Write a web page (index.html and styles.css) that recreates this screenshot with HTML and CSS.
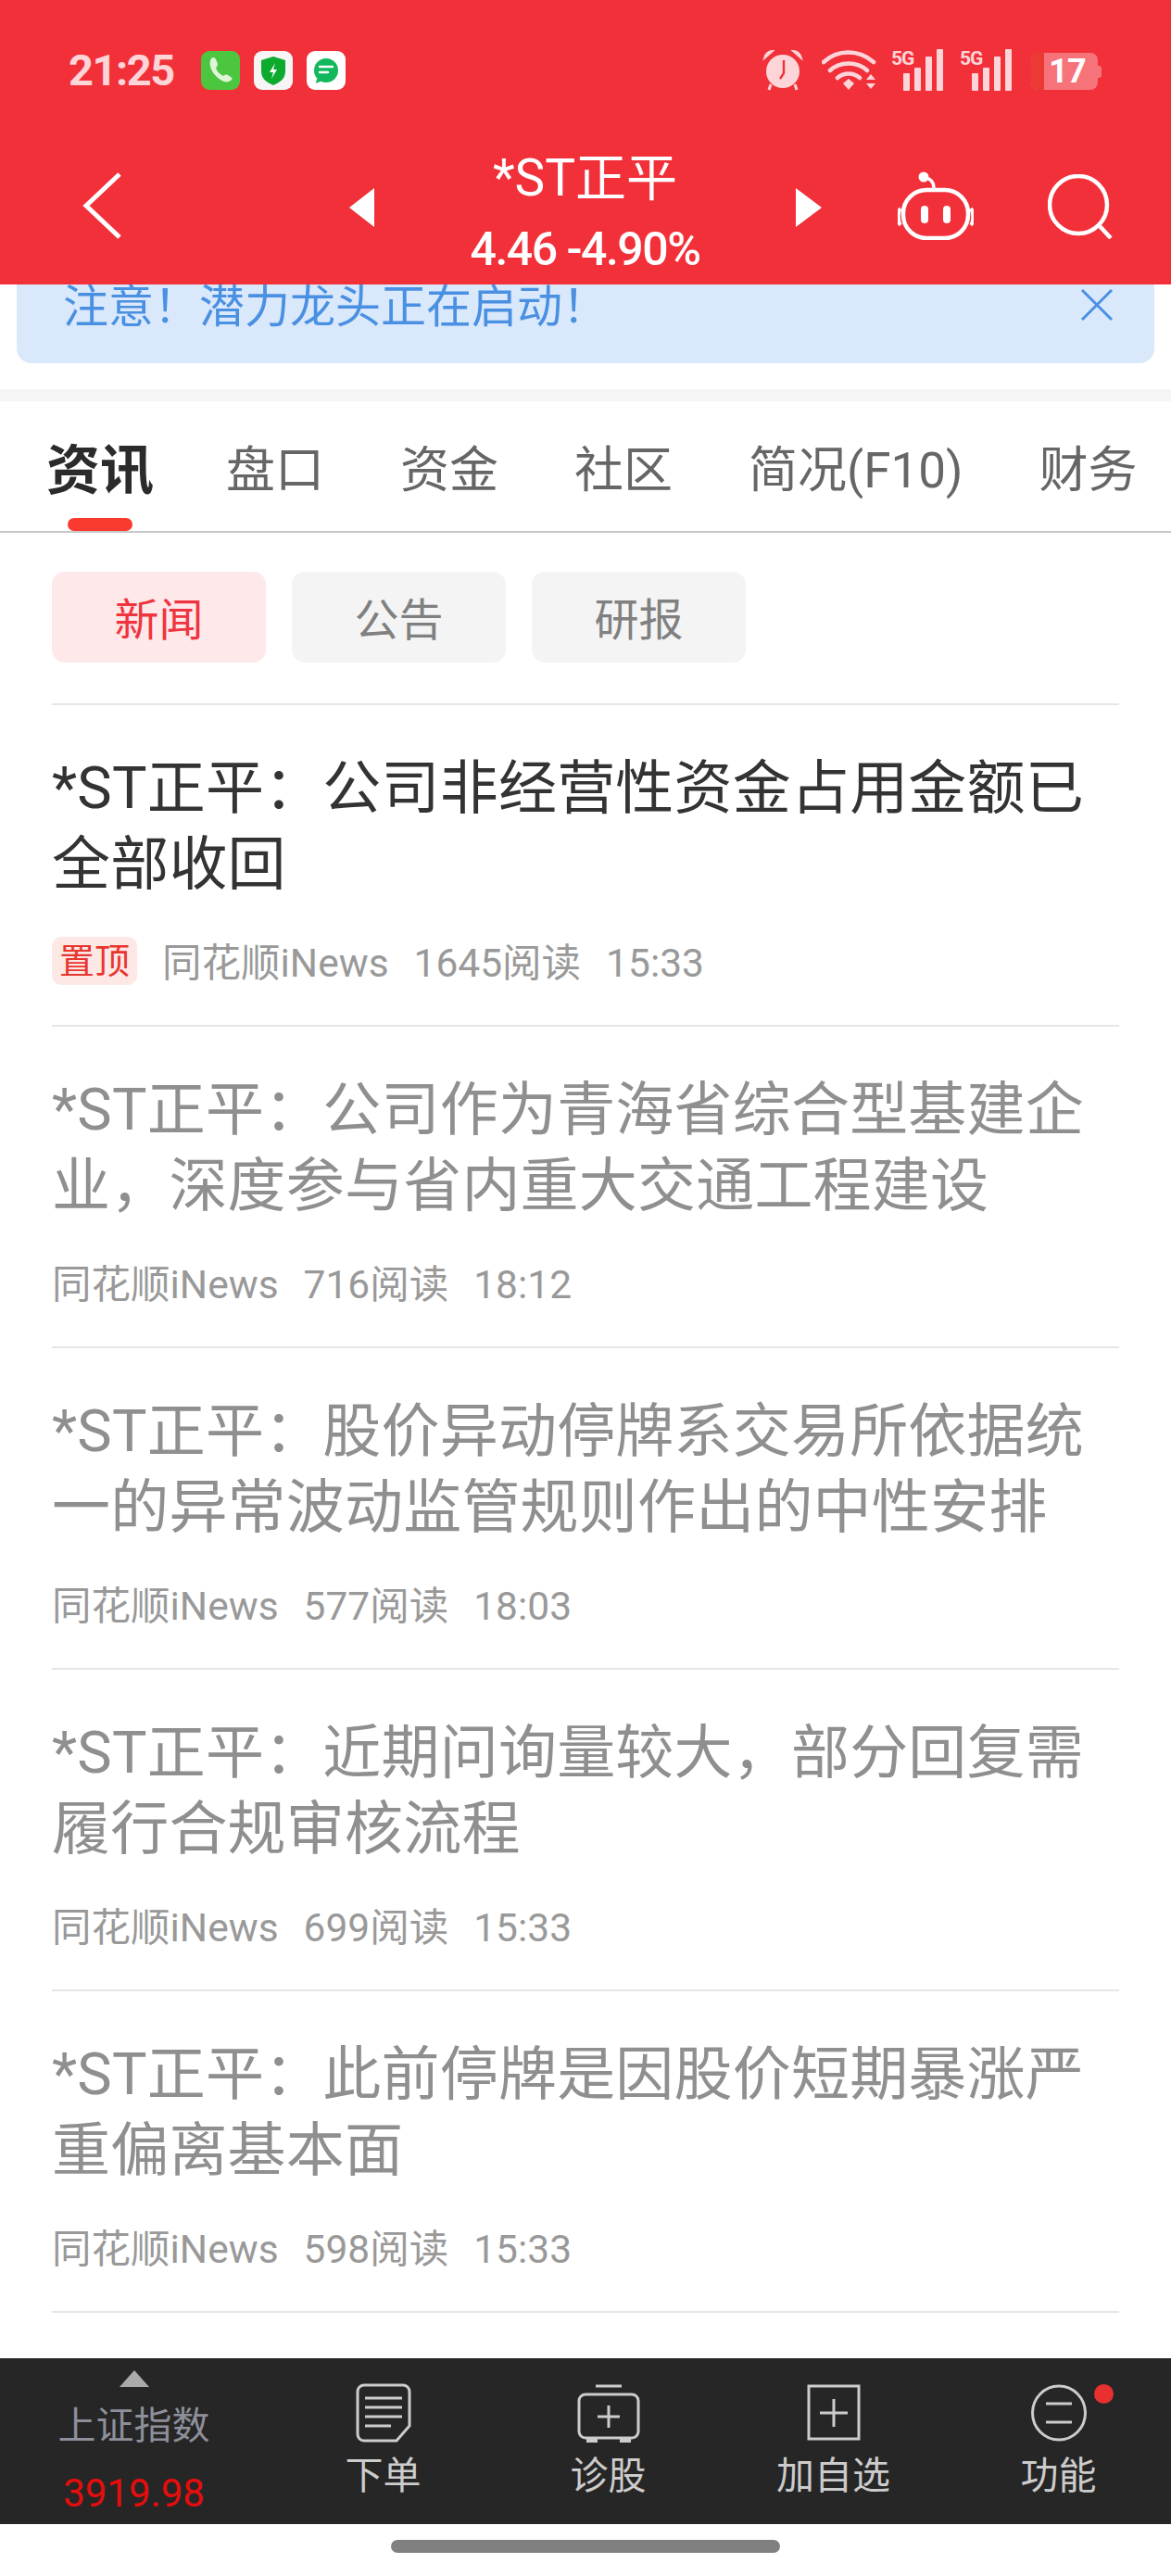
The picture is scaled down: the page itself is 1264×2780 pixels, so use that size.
FILE: index.html
```html
<!DOCTYPE html>
<html lang="zh-CN">
<head>
  <meta charset="UTF-8" />
  <meta name="viewport" content="width=device-width, initial-scale=1.0" />
  <title>*ST正平</title>
  <link rel="stylesheet" href="styles.css">
</head>
<body>
  <div class="page">
    <header class="top">
      <div class="status">
        <div class="status-left">
          <span class="clock">21:25</span>
          <svg class="app-icon" viewBox="0 0 42 42"><rect width="42" height="42" rx="9" fill="#4cc53f"/><path d="M11 8c2-2 4-1 5 1l2 5c0 2-1 3-2 4 1 4 4 7 8 9 1-1 3-2 5-1l3 2c2 1 2 3 0 4-3 2-7 2-11-1-6-4-10-9-11-15-1-3 0-6 1-8z" fill="#dff5d8"/></svg>
          <svg class="app-icon" viewBox="0 0 42 42"><rect width="42" height="42" rx="9" fill="#f4f5f4"/><path d="M21 6l13 4v12c0 8-6 12-13 15-7-3-13-7-13-15V10z" fill="#0cab2e"/><path d="M23 13l-6 10h4l-2 7 6-10h-4z" fill="#fff"/></svg>
          <svg class="app-icon" viewBox="0 0 42 42"><rect width="42" height="42" rx="9" fill="#fff"/><circle cx="21" cy="21" r="13" fill="#12b85c"/><path d="M11 30l-1 5 7-3z" fill="#12b85c"/><path d="M14 17h14M14 23h9" stroke="#fff" stroke-width="2.4" stroke-linecap="round"/></svg>
        </div>
        <div class="status-right">
          <svg class="alarm" viewBox="0 0 44 45"><path d="M2 10c1-5 5-8 9-8l-9 8zM42 10c-1-5-5-8-9-8l9 8z" fill="#fdd5d8" stroke="#fdd5d8" stroke-width="2"/><ellipse cx="22" cy="24" rx="18" ry="18" fill="#fdd5d8"/><path d="M9 38l-2 6M35 38l2 6" stroke="#fdd5d8" stroke-width="3"/><path d="M23 12v14l-4 6" stroke="#f2303a" stroke-width="2.4" fill="none"/></svg>
          <svg class="wifi" viewBox="0 0 60 45"><path d="M2 14c15-14 38-14 54 0M9 23c11-10 29-10 40 0M17 31c7-6 17-6 24 0" stroke="#fdd5d8" stroke-width="4.5" fill="none" stroke-linecap="round"/><path d="M23 37l6-5 6 5-6 7z" fill="#fdd5d8"/><path d="M48 33l5-6 5 6zM48 37h10l-5 6z" fill="#fdd5d8"/></svg>
          <div class="signal">
            <span class="fiveg">5G</span>
            <i class="b1"></i><i class="b2"></i><i class="b3"></i><i class="b4"></i>
          </div>
          <div class="signal">
            <span class="fiveg">5G</span>
            <i class="b1"></i><i class="b2"></i><i class="b3"></i><i class="b4"></i>
          </div>
          <div class="battery">
            <span class="battery-low"></span>
            <span class="battery-num">17</span>
          </div>
        </div>
      </div>
      <div class="nav">
        <svg class="back" viewBox="0 0 44 74"><path d="M41 3L5 37l36 34" stroke="#fff" stroke-width="5" fill="none"/></svg>
        <div class="prev"></div>
        <div class="stock">
          <div class="stock-name">*ST正平</div>
          <div class="stock-price">4.46 -4.90%</div>
        </div>
        <div class="next"></div>
        <svg class="robot" viewBox="0 0 82 74"><circle cx="28" cy="6" r="5.5" fill="#fff"/><path d="M30 7c6 1 9 4 9 11" stroke="#fff" stroke-width="3.5" fill="none"/><rect x="6" y="20" width="70" height="52" rx="25" stroke="#fff" stroke-width="4.5" fill="none"/><path d="M3 40c-3 4-3 14 0 18M79 40c3 4 3 14 0 18" stroke="#fff" stroke-width="4" fill="none"/><rect x="25" y="37" width="8" height="19" rx="4" fill="#fff"/><rect x="49" y="37" width="8" height="19" rx="4" fill="#fff"/></svg>
        <svg class="search" viewBox="0 0 70 70"><circle cx="33" cy="33" r="31" stroke="#fff" stroke-width="4.5" fill="none"/><path d="M56 56l12 13" stroke="#fff" stroke-width="4.5"/></svg>
      </div>
    </header>

    <main class="content">
      <div class="banner">
        <span>注意！潜力龙头正在启动！</span>
        <svg class="banner-close" viewBox="0 0 36 36"><path d="M2 2l32 32M34 2L2 34" stroke="#4a90e2" stroke-width="3"/></svg>
      </div>
      <div class="strip"></div>

      <div class="tabs">
        <div class="tab active">资讯</div>
        <div class="tab">盘口</div>
        <div class="tab">资金</div>
        <div class="tab">社区</div>
        <div class="tab">简况(F10)</div>
        <div class="tab">财务</div>
      </div>

      <div class="sub-tabs">
        <div class="sub-tab on">新闻</div>
        <div class="sub-tab">公告</div>
        <div class="sub-tab">研报</div>
      </div>

      <div class="news">
        <div class="news-item top-item">
          <div class="news-title">*ST正平：公司非经营性资金占用金额已全部收回</div>
          <div class="news-meta"><span class="pin">置顶</span><span>同花顺iNews</span><span>1645阅读</span><span>15:33</span></div>
        </div>
        <div class="news-item">
          <div class="news-title">*ST正平：公司作为青海省综合型基建企业，深度参与省内重大交通工程建设</div>
          <div class="news-meta"><span>同花顺iNews</span><span>716阅读</span><span>18:12</span></div>
        </div>
        <div class="news-item">
          <div class="news-title">*ST正平：股价异动停牌系交易所依据统一的异常波动监管规则作出的中性安排</div>
          <div class="news-meta"><span>同花顺iNews</span><span>577阅读</span><span>18:03</span></div>
        </div>
        <div class="news-item">
          <div class="news-title">*ST正平：近期问询量较大，部分回复需履行合规审核流程</div>
          <div class="news-meta"><span>同花顺iNews</span><span>699阅读</span><span>15:33</span></div>
        </div>
        <div class="news-item">
          <div class="news-title">*ST正平：此前停牌是因股价短期暴涨严重偏离基本面</div>
          <div class="news-meta"><span>同花顺iNews</span><span>598阅读</span><span>15:33</span></div>
        </div>
      </div>
    </main>

    <footer class="bar">
      <div class="bar-index">
        <div class="index-arrow"></div>
        <div class="index-name">上证指数</div>
        <div class="index-value">3919.98</div>
      </div>
      <div class="bar-item">
        <svg class="bar-icon" viewBox="0 0 60 64"><path d="M9 2h42a7 7 0 0 1 7 7v37L44 62H9a7 7 0 0 1-7-7V9a7 7 0 0 1 7-7z" stroke="#ccc" stroke-width="3" fill="none"/><path d="M10 16h40M10 26h40M10 36h40M10 46h28" stroke="#ccc" stroke-width="3"/></svg>
        <span>下单</span>
      </div>
      <div class="bar-item">
        <svg class="bar-icon wide" viewBox="0 0 68 64"><path d="M20 3h28" stroke="#ccc" stroke-width="3"/><rect x="2" y="12" width="64" height="47" rx="7" stroke="#ccc" stroke-width="3" fill="none"/><path d="M34 24v24M22 36h24" stroke="#ccc" stroke-width="3"/><path d="M10 59h12v5H10zM46 59h12v5H46z" fill="#ccc"/></svg>
        <span>诊股</span>
      </div>
      <div class="bar-item">
        <svg class="bar-icon" viewBox="0 0 60 64"><rect x="3" y="3" width="54" height="57" stroke="#ccc" stroke-width="3" fill="none"/><path d="M30 17v30M15 32h30" stroke="#ccc" stroke-width="3"/></svg>
        <span>加自选</span>
      </div>
      <div class="bar-item">
        <svg class="bar-icon" viewBox="0 0 60 64"><ellipse cx="30" cy="32" rx="28.5" ry="29" stroke="#ccc" stroke-width="3" fill="none"/><path d="M16 22h28M16 42h28" stroke="#ccc" stroke-width="3"/></svg>
        <span class="dot"></span>
        <span>功能</span>
      </div>
    </footer>

    <div class="home-area"><div class="home-line"></div></div>
  </div>
</body>
</html>
```

FILE: styles.css
```css
* {
  box-sizing: border-box;
}
body {
  margin: 0;
  padding: 0;
  background: #fff;
  font-family: Roboto, "Noto Sans CJK SC", sans-serif;
}
.page {
  display: flex;
  flex-direction: column;
  height: 2780px;
  overflow: hidden;
}

/* red header */
.top {
  flex: none;
  height: 307px;
  background: #f2303a;
  color: #fff;
  position: relative;
  z-index: 2;
}
.status {
  display: flex;
  justify-content: space-between;
  align-items: flex-start;
  padding: 53px 75px 0 74px;
  height: 110px;
}
.status-left {
  display: flex;
  align-items: center;
  gap: 15px;
  height: 45px;
}
.clock {
  font-size: 47px;
  font-weight: 700;
  letter-spacing: -1.5px;
  color: #fdd5d8;
  width: 128px;
}
.app-icon {
  width: 42px;
  height: 42px;
}
.status-right {
  display: flex;
  align-items: flex-start;
  height: 45px;
}
.alarm {
  width: 44px;
  height: 45px;
  margin-right: 20px;
}
.wifi {
  width: 60px;
  height: 45px;
  margin-right: 15px;
}
.signal {
  display: flex;
  align-items: flex-end;
  gap: 5px;
  width: 56px;
  height: 45px;
  margin-right: 18px;
  position: relative;
  justify-content: flex-end;
}
.fiveg {
  position: absolute;
  left: 0;
  top: 0;
  font-size: 21px;
  line-height: 21px;
  font-weight: 700;
  letter-spacing: -1px;
  color: #fdd5d8;
}
.signal i {
  display: block;
  width: 7px;
  background: #fdd5d8;
  border-radius: 1px;
}
.signal .b1 { height: 19px; }
.signal .b2 { height: 25px; }
.signal .b3 { height: 37px; }
.signal .b4 { height: 45px; }
.battery {
  display: flex;
  align-items: center;
  justify-content: center;
  width: 72px;
  height: 40px;
  margin: 4px 4px 0 3px;
  border-radius: 8px;
  background: #f7737a;
  position: relative;
}
.battery::after {
  content: "";
  position: absolute;
  right: -4px;
  top: 14px;
  width: 4px;
  height: 13px;
  border-radius: 0 3px 3px 0;
  background: #f7737a;
}
.battery-low {
  position: absolute;
  left: 0;
  top: 0;
  bottom: 0;
  width: 14px;
  background: #ea3a33;
  border-radius: 8px 0 0 8px;
}
.battery-num {
  position: relative;
  font-size: 36px;
  font-weight: 700;
  letter-spacing: -1px;
  color: #fff;
  padding-left: 6px;
}

.nav {
  display: flex;
  align-items: flex-start;
  height: 197px;
}
.back {
  width: 44px;
  height: 74px;
  margin: 75px 0 0 88px;
}
.prev, .next {
  width: 0;
  height: 0;
  border-top: 21px solid transparent;
  border-bottom: 21px solid transparent;
  margin-top: 93px;
}
.prev {
  border-right: 27px solid #fff;
  margin-left: 245px;
}
.next {
  border-left: 28px solid #fff;
}
.stock {
  width: 455px;
  text-align: center;
  padding-top: 52px;
}
.stock-name {
  font-size: 55px;
  line-height: 60px;
}
.stock-price {
  font-size: 50px;
  line-height: 60px;
  margin-top: 17px;
  font-weight: 500;
  letter-spacing: -1.5px;
}
.robot {
  width: 82px;
  height: 74px;
  margin: 75px 0 0 82px;
}
.search {
  width: 70px;
  height: 70px;
  margin: 78px 0 0 80px;
}

/* scrolling part */
.content {
  flex: 1;
  overflow: hidden;
}
.banner {
  display: flex;
  justify-content: space-between;
  height: 120px;
  margin: -35px 18px 0;
  padding: 29px 44px 0 50px;
  background: #d9e8fb;
  border-radius: 16px;
  color: #4a90e2;
  font-size: 49px;
  line-height: 62px;
}
.banner-close {
  width: 36px;
  height: 36px;
  margin-top: 10px;
}
.strip {
  height: 13px;
  margin-top: 28px;
  background: #f5f5f5;
}
.tabs {
  display: flex;
  align-items: center;
  gap: 82px;
  height: 142px;
  padding: 10px 0 0 50px;
  border-bottom: 2px solid #c8c8c8;
  font-size: 53px;
  color: #666;
  white-space: nowrap;
}
.tab {
  position: relative;
  line-height: 130px;
}
.tab.active {
  font-size: 58px;
  font-weight: 700;
  color: #2b2b2b;
  margin-right: -4px;
}
.tab.active::after {
  content: "";
  position: absolute;
  left: 23px;
  bottom: 0;
  width: 70px;
  height: 14px;
  border-radius: 7px;
  background: #f93a2f;
}
.sub-tabs {
  display: flex;
  gap: 28px;
  padding: 42px 56px 44px;
}
.sub-tab {
  width: 231px;
  height: 98px;
  line-height: 106px;
  text-align: center;
  border-radius: 14px;
  font-size: 48px;
  background: #f4f4f4;
  color: #808080;
}
.sub-tab.on {
  background: #fee8ea;
  color: #f0343f;
}
.news {
  margin: 0 56px;
}
.news-item {
  height: 347px;
  border-top: 2px solid #e6e6e6;
  padding-top: 49px;
}
.news-item:last-child {
  border-bottom: 2px solid #e6e6e6;
  height: 349px;
}
.news-title {
  font-size: 63px;
  line-height: 82px;
  letter-spacing: 0.2px;
  color: #8f8f8f;
}
.top-item .news-title {
  color: #333;
}
.news-meta {
  display: flex;
  align-items: center;
  gap: 27px;
  margin-top: 39px;
  height: 54px;
  font-size: 42.5px;
  line-height: 54px;
  color: #999;
  white-space: nowrap;
}
.pin {
  width: 92px;
  height: 52px;
  margin-top: -6px;
  line-height: 52px;
  text-align: center;
  font-size: 38px;
  background: #fde8e6;
  color: #e8352e;
  border-radius: 10px;
}

/* bottom bar */
.bar {
  flex: none;
  display: flex;
  height: 179px;
  padding-left: 23px;
  background: #262626;
  color: #ccc;
}
.bar-index {
  width: 243px;
  margin-right: 26px;
  text-align: center;
  padding-top: 13px;
}
.index-arrow {
  width: 0;
  height: 0;
  margin: 0 auto;
  border-left: 16px solid transparent;
  border-right: 16px solid transparent;
  border-bottom: 18px solid #aaa;
}
.index-name {
  font-size: 41px;
  line-height: 60px;
  margin-top: 12px;
  color: #8d8f9a;
}
.index-value {
  font-size: 42px;
  line-height: 50px;
  margin-top: 18px;
  color: #e60d0d;
}
.bar-item {
  width: 243px;
  display: flex;
  flex-direction: column;
  align-items: center;
  position: relative;
  padding-top: 27px;
  font-size: 41px;
  line-height: 60px;
}
.bar-icon {
  width: 60px;
  height: 64px;
  margin-bottom: 6px;
  flex: none;
}
.bar-icon.wide {
  width: 68px;
}
.dot {
  position: absolute;
  left: 160px;
  top: 28px;
  width: 21px;
  height: 21px;
  border-radius: 50%;
  background: #e83030;
}
.home-area {
  flex: none;
  height: 56px;
  padding-top: 17px;
}
.home-line {
  width: 420px;
  height: 14px;
  margin: 0 auto;
  border-radius: 7px;
  background: #808080;
}
```
